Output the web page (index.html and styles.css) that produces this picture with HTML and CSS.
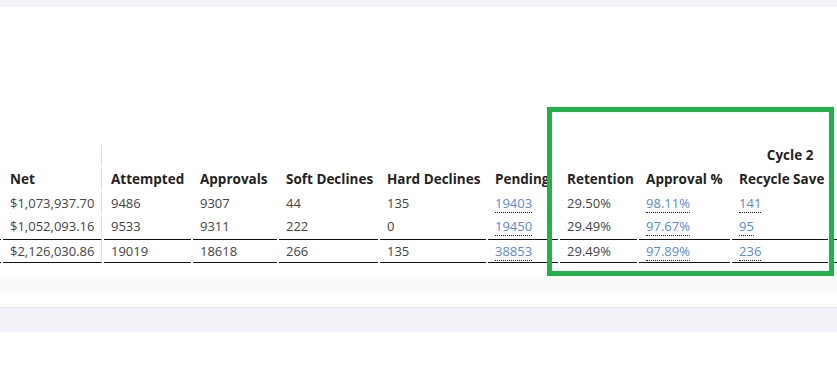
FILE: index.html
```html
<!DOCTYPE html>
<html lang="en">
<head>
<meta charset="utf-8">
<title>Cycle report</title>
<link rel="stylesheet" href="styles.css">
</head>
<body>
<div class="topbar"></div>
<main class="card">
  <div class="table-scroll">
    <table class="report">
      <colgroup>
        <col class="c-prev"><col class="c-net"><col class="c-att"><col class="c-app"><col class="c-soft"><col class="c-hard"><col class="c-pend"><col class="c-ret"><col class="c-pct"><col class="c-rec"><col class="c-next">
      </colgroup>
      <thead>
        <tr class="group-row">
          <th colspan="2" class="sep"></th>
          <th colspan="5"></th>
          <th colspan="4" class="group">Cycle 2</th>
        </tr>
        <tr class="head-row">
          <th></th>
          <th class="sep">Net</th>
          <th>Attempted</th>
          <th>Approvals</th>
          <th>Soft Declines</th>
          <th>Hard Declines</th>
          <th>Pending</th>
          <th>Retention</th>
          <th>Approval %</th>
          <th>Recycle Save</th>
          <th></th>
        </tr>
      </thead>
      <tbody>
        <tr class="row-a">
          <td></td>
          <td class="sep">$1,073,937.70</td>
          <td>9486</td>
          <td>9307</td>
          <td>44</td>
          <td>135</td>
          <td><a class="lnk">19403</a></td>
          <td>29.50%</td>
          <td><a class="lnk">98.11%</a></td>
          <td><a class="lnk">141</a></td>
          <td></td>
        </tr>
        <tr class="row-b">
          <td></td>
          <td class="sep">$1,052,093.16</td>
          <td>9533</td>
          <td>9311</td>
          <td>222</td>
          <td>0</td>
          <td><a class="lnk">19450</a></td>
          <td>29.49%</td>
          <td><a class="lnk">97.67%</a></td>
          <td><a class="lnk">95</a></td>
          <td></td>
        </tr>
      </tbody>
      <tfoot>
        <tr class="total-row">
          <td></td>
          <td class="sep">$2,126,030.86</td>
          <td>19019</td>
          <td>18618</td>
          <td>266</td>
          <td>135</td>
          <td><a class="lnk">38853</a></td>
          <td>29.49%</td>
          <td><a class="lnk">97.89%</a></td>
          <td><a class="lnk">236</a></td>
          <td></td>
        </tr>
      </tfoot>
    </table>
  </div>
  <div class="scroll-track"></div>
</main>
<div class="band"></div>
<div class="highlight"></div>
</body>
</html>
```
FILE: styles.css
```css
* { box-sizing: border-box; }
html, body { margin: 0; padding: 0; background: #ffffff; }
body {
  font-family: "Open Sans", "Liberation Sans", sans-serif;
  font-size: 13px;
  color: #444444;
  overflow: hidden;
  width: 837px;
  height: 374px;
}
.topbar { height: 7px; background: #f3f2f7; }
.card { background: #ffffff; padding: 136px 0 15px; }
.table-scroll { overflow: hidden; width: 100%; }
.report {
  table-layout: fixed;
  width: 983px;
  margin-left: -61px;
  border-collapse: separate;
  border-spacing: 2px;
}
.c-prev { width: 60px; }
.c-net { width: 99px; }
.c-att { width: 87px; }
.c-app { width: 84px; }
.c-soft { width: 99px; }
.c-hard { width: 106px; }
.c-pend { width: 70px; }
.c-ret { width: 77px; }
.c-pct { width: 91px; }
.c-rec { width: 96px; }
.c-next { width: 190px; }

.report th, .report td {
  padding: 0 7px;
  text-align: left;
  white-space: nowrap;
  overflow: hidden;
  vertical-align: middle;
}
.report th {
  font-size: 13.5px;
  font-weight: 700;
  color: #232323;
}
.report .group { text-align: center; }
.report .sep { border-right: 1px solid #dcdcdc; }
.group-row th { line-height: 21px; }
.head-row th { line-height: 22px; }
.row-a td { line-height: 22px; }
.row-b td { line-height: 21px; }
.total-row td {
  line-height: 22px;
  border-top: 1px solid #111111;
  border-bottom: 1px solid #111111;
}
.lnk {
  color: #5b8ad6;
  text-decoration: none;
  border-bottom: 1px dotted #222222;
}
.scroll-track { height: 15px; margin-top: 12px; background: #fafafa; }
.band {
  height: 25px;
  background: #f3f2f8;
  border-top: 1px solid #e3e3e9;
}
.highlight {
  position: absolute;
  left: 547px;
  top: 107px;
  width: 287px;
  height: 169px;
  border: 5px solid #22b14c;
}
```
